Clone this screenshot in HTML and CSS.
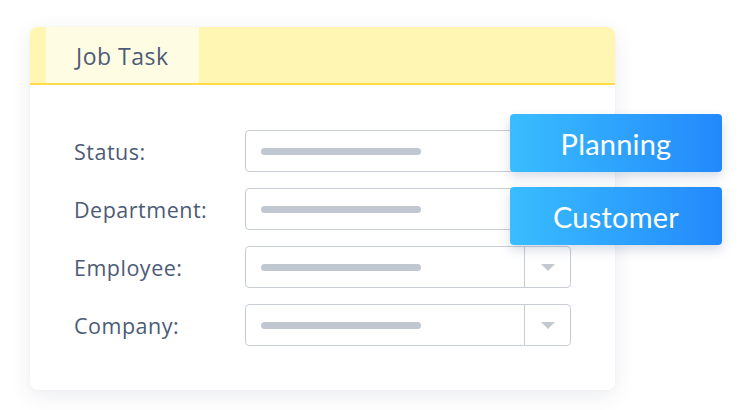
FILE: index.html
```html
<!DOCTYPE html>
<html>
<head>
<meta charset="utf-8">
<link rel="stylesheet" href="styles.css">
</head>
<body>
<div class="stage">
  <div class="card">
    <div class="card-header">
      <div class="tab">Job Task</div>
    </div>
    <div class="form">
      <div class="row">
        <div class="label">Status:</div>
        <div class="field"><div class="value"><span class="bar"></span></div><div class="caret"><span class="tri"></span></div></div>
      </div>
      <div class="row">
        <div class="label">Department:</div>
        <div class="field"><div class="value"><span class="bar"></span></div><div class="caret"><span class="tri"></span></div></div>
      </div>
      <div class="row">
        <div class="label">Employee:</div>
        <div class="field"><div class="value"><span class="bar"></span></div><div class="caret"><span class="tri"></span></div></div>
      </div>
      <div class="row">
        <div class="label">Company:</div>
        <div class="field"><div class="value"><span class="bar"></span></div><div class="caret"><span class="tri"></span></div></div>
      </div>
    </div>
  </div>
  <div class="chip chip-planning">Planning</div>
  <div class="chip chip-customer">Customer</div>
</div>
</body>
</html>
```
FILE: styles.css
```css
html, body {
  margin: 0;
  padding: 0;
  background: #ffffff;
}
body {
  font-family: "Open Sans", Lato, sans-serif;
  width: 754px;
  height: 410px;
  overflow: hidden;
}
.stage {
  position: relative;
  width: 754px;
  height: 410px;
  padding: 27px 0 0 30px;
  box-sizing: border-box;
}
.card {
  width: 585px;
  height: 363px;
  background: #ffffff;
  border-radius: 8px;
  box-shadow: 0 6px 22px rgba(40, 55, 90, 0.09), 0 0 3px rgba(40, 55, 90, 0.04);
  overflow: hidden;
}
.card-header {
  height: 56px;
  background: #fff6b4;
  border-bottom: 2px solid #ffda4a;
  padding-left: 16px;
  display: flex;
}
.tab {
  width: 153px;
  box-sizing: border-box;
  background: #fffce4;
  padding-left: 30px;
  display: flex;
  align-items: center;
  font-size: 23px;
  letter-spacing: 0.5px;
  color: #4d5b74;
  padding-top: 1px;
}
.form {
  padding: 45px 0 0 44px;
  display: flex;
  flex-direction: column;
  gap: 16px;
}
.row {
  display: flex;
  align-items: center;
  height: 42px;
}
.label {
  width: 171px;
  font-size: 21.5px;
  letter-spacing: 0.5px;
  color: #4c5b75;
}
.field {
  width: 326px;
  height: 42px;
  box-sizing: border-box;
  border: 1.5px solid #c7ccd5;
  border-radius: 4px;
  display: flex;
}
.value {
  flex: 1;
  display: flex;
  align-items: center;
  padding-left: 15px;
}
.bar {
  display: block;
  width: 160px;
  height: 7px;
  border-radius: 4px;
  background: #c1c7d1;
}
.caret {
  width: 45px;
  border-left: 1.5px solid #c7ccd5;
  display: flex;
  align-items: center;
  justify-content: center;
}
.tri {
  width: 0;
  height: 0;
  border-left: 7px solid transparent;
  border-right: 7px solid transparent;
  border-top: 7px solid #c3c8d1;
}
.chip {
  position: absolute;
  left: 510px;
  width: 212px;
  height: 58px;
  border-radius: 4px;
  background: linear-gradient(90deg, #39bdfd 0%, #2389fb 100%);
  color: #ffffff;
  font-family: Lato, "Open Sans", sans-serif;
  font-size: 29px;
  letter-spacing: 0.2px;
  display: flex;
  align-items: center;
  justify-content: center;
  box-shadow: 0 5px 12px rgba(30, 60, 120, 0.18);
}
.chip-planning {
  top: 114px;
}
.chip-customer {
  top: 187px;
}
```
